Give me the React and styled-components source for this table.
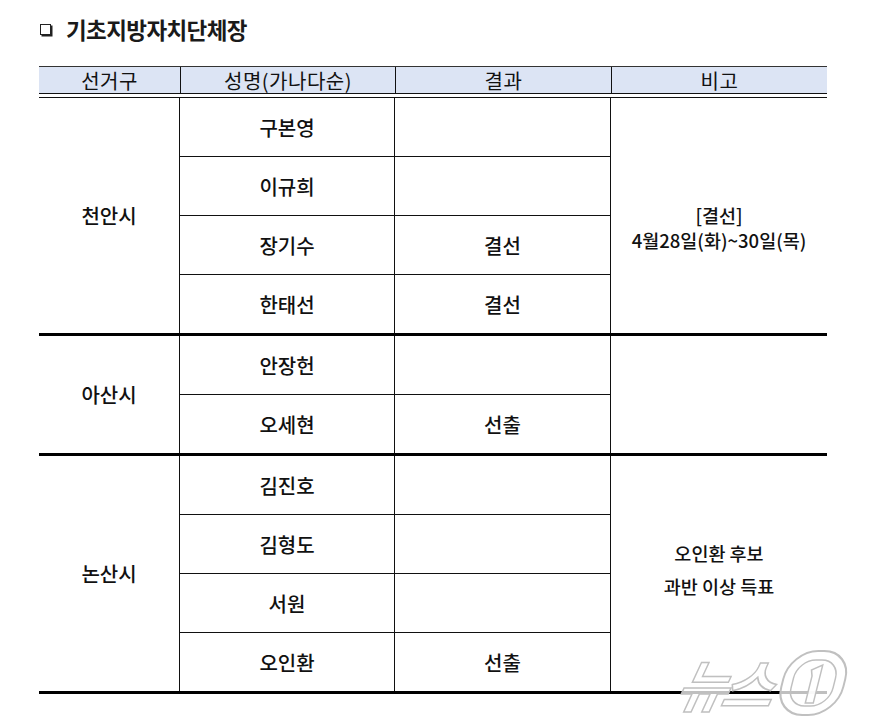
import React from "react";
import styled, { createGlobalStyle } from "styled-components";

const Global = createGlobalStyle`
  html, body { margin: 0; padding: 0; background: #fff; }
  body { font-family: "Noto Sans CJK KR", "Noto Sans", sans-serif; color: #111; }
`;

const Page = styled.div`
  position: relative;
  width: 876px;
  height: 728px;
  padding: 13px 0 0 39px;
  box-sizing: border-box;
  overflow: hidden;
`;

const Title = styled.h1`
  display: flex;
  align-items: center;
  gap: 15px;
  margin: 0 0 21px 1px;
  height: 32px;
  font-size: 22.5px;
  font-weight: 700;
  color: #1a1a1a;
  letter-spacing: -0.6px;
`;

const Box = styled.span`
  width: 9px;
  height: 9px;
  border: 1.5px solid #222;
  box-shadow: 1.5px 1.5px 0 #222;
`;

const cols = "141px 215px 216px 216px";

const Head = styled.div`
  display: grid;
  grid-template-columns: ${cols};
  width: 788px;
  border-top: 1px solid #333;
  border-bottom: 1px solid #111;
  background: #dce4f4;
`;

const HeadCell = styled.div`
  height: 26px;
  display: flex;
  align-items: center;
  justify-content: center;
  font-size: 20px;
  font-weight: 400;
  letter-spacing: 0.5px;
  border-left: ${(p) => (p.$first ? "none" : "1px solid #111")};
`;

const Body = styled.div`
  width: 788px;
  margin-top: 3px;
  border-top: 1px solid #111;
`;

const Group = styled.div`
  display: grid;
  grid-template-columns: ${cols};
  grid-template-rows: repeat(${(p) => p.$rows}, auto);
  border-bottom: 3px solid #000;
`;

const District = styled.div`
  grid-column: 1;
  grid-row: 1 / span ${(p) => p.$rows};
  display: flex;
  align-items: center;
  justify-content: center;
  font-size: 20px;
  font-weight: 500;
  border-right: 1px solid #111;
`;

const Cell = styled.div`
  grid-column: ${(p) => p.$col};
  height: 58px;
  display: flex;
  align-items: center;
  justify-content: center;
  font-size: 20px;
  font-weight: 500;
  border-bottom: ${(p) => (p.$last ? "none" : "1px solid #111")};
  border-right: 1px solid #111;
  box-sizing: content-box;
`;

const Note = styled.div`
  grid-column: 4;
  grid-row: 1 / span ${(p) => p.$rows};
  display: flex;
  flex-direction: column;
  align-items: center;
  justify-content: center;
  gap: ${(p) => p.$gap}px;
  padding-top: ${(p) => p.$pt}px;
  padding-bottom: ${(p) => p.$pb}px;
  font-size: 18.5px;
  font-weight: 500;
  line-height: 1;
`;

const Watermark = styled.div`
  position: absolute;
  left: 678px;
  top: 648px;
  width: 190px;
  display: flex;
  align-items: center;
  white-space: nowrap;
  pointer-events: none;
`;

const WmText = styled.span`
  flex-shrink: 0;
  font-family: "Noto Sans CJK KR", sans-serif;
  font-size: 56px;
  font-weight: 700;
  font-style: italic;
  color: rgba(255, 255, 255, 0.75);
  -webkit-text-stroke: 1.5px #c0c0c0;
  letter-spacing: -6px;
  transform: skewX(-12deg);
  line-height: 1;
`;

const WmBadge = styled.svg`
  flex-shrink: 0;
  margin-left: 2px;
`;

const groups = [
  {
    district: "천안시",
    people: [
      ["구본영", ""],
      ["이규희", ""],
      ["장기수", "결선"],
      ["한태선", "결선"],
    ],
    note: ["[결선]", "4월28일(화)~30일(목)"],
    gap: 6,
    pt: 24,
    pb: 0,
  },
  {
    district: "아산시",
    people: [
      ["안장헌", ""],
      ["오세현", "선출"],
    ],
    note: [],
    gap: 0,
    pt: 0,
    pb: 0,
  },
  {
    district: "논산시",
    people: [
      ["김진호", ""],
      ["김형도", ""],
      ["서원", ""],
      ["오인환", "선출"],
    ],
    note: ["오인환 후보", "과반 이상 득표"],
    gap: 14,
    pt: 0,
    pb: 8,
  },
];

export default function App() {
  return (
    <>
      <Global />
      <Page>
        <Title>
          <Box />
          기초지방자치단체장
        </Title>
        <Head>
          <HeadCell $first>선거구</HeadCell>
          <HeadCell>성명(가나다순)</HeadCell>
          <HeadCell>결과</HeadCell>
          <HeadCell>비고</HeadCell>
        </Head>
        <Body>
          {groups.map((g) => (
            <Group key={g.district} $rows={g.people.length}>
              <District $rows={g.people.length}>{g.district}</District>
              {g.people.map(([name, res], i) => {
                const last = i === g.people.length - 1;
                return (
                  <React.Fragment key={name}>
                    <Cell $col={2} $last={last} style={{ gridRow: i + 1 }}>
                      {name}
                    </Cell>
                    <Cell $col={3} $last={last} style={{ gridRow: i + 1 }}>
                      {res}
                    </Cell>
                  </React.Fragment>
                );
              })}
              <Note $rows={g.people.length} $gap={g.gap} $pt={g.pt} $pb={g.pb}>
                {g.note.map((n) => (
                  <span key={n}>{n}</span>
                ))}
              </Note>
            </Group>
          ))}
        </Body>
        <Watermark>
          <WmText>뉴스</WmText>
          <WmBadge width="80" height="70" viewBox="0 0 80 70">
            <g transform="skewX(-14) translate(16 0)">
              <rect x="4" y="3" width="62" height="64" rx="28" fill="rgba(255,255,255,0.75)" stroke="#c0c0c0" strokeWidth="2" />
              <rect x="14" y="12" width="42" height="46" rx="18" fill="none" stroke="#c0c0c0" strokeWidth="1.5" />
              <path d="M30 22 L40 17 L40 55 L32 55 L32 28 Z" fill="rgba(255,255,255,0.9)" stroke="#c0c0c0" strokeWidth="1.5" />
            </g>
          </WmBadge>
        </Watermark>
      </Page>
    </>
  );
}
